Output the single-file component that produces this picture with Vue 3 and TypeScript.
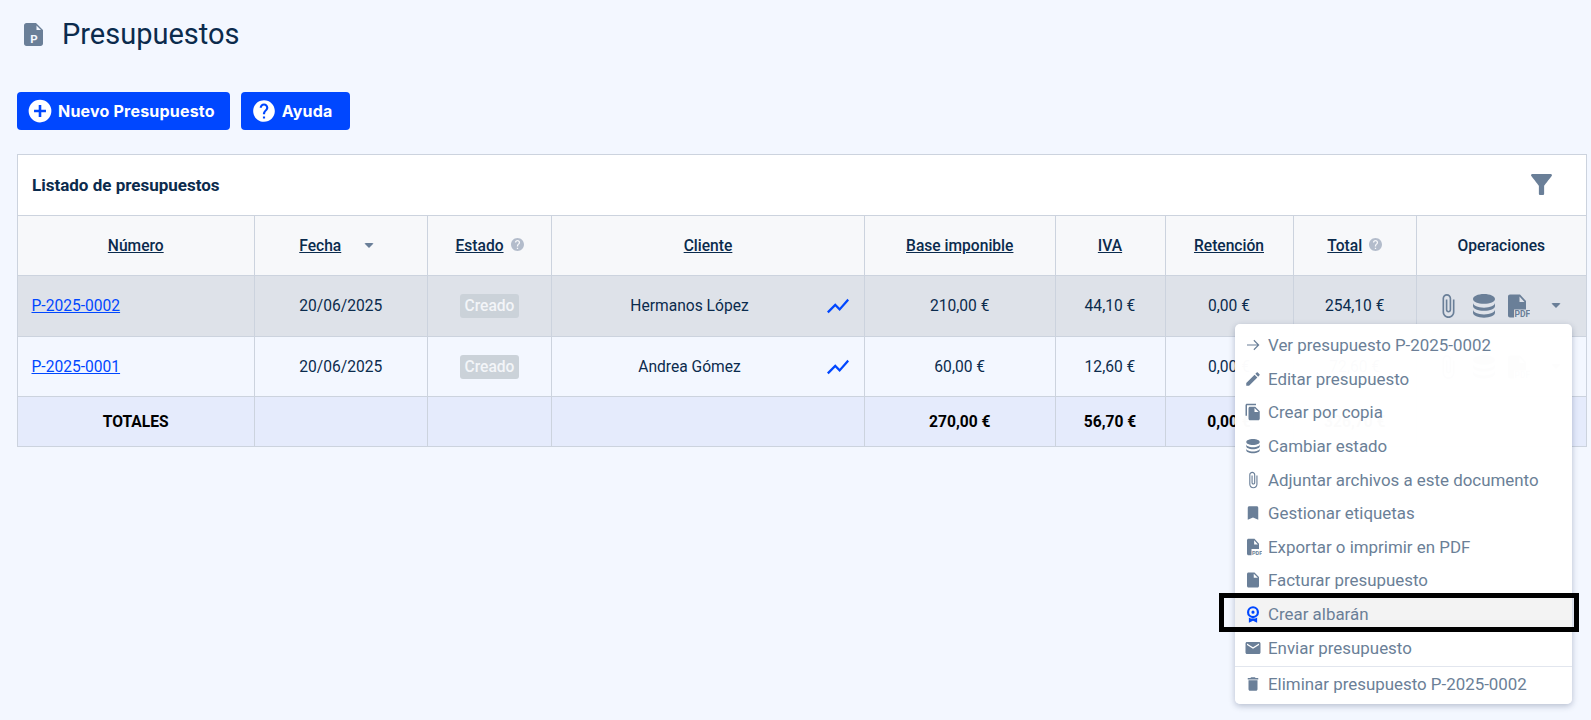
<script setup lang="ts">
interface MenuItem {
  label: string
  d: string
  pdf?: boolean
  active?: boolean
  rule?: boolean
}
interface Row {
  num: string
  client: string
  base: string
  iva: string
  ret: string
  total: string
  cls: string
}

const P = {
  arrow: 'M4 11.2h13.6l-5-5 1.1-1.1 6.9 6.9-6.9 6.9-1.1-1.1 5-5H4z',
  edit: 'M3 17.25V21h3.75L17.81 9.94l-3.75-3.75L3 17.25zM20.71 7.04c.39-.39.39-1.02 0-1.41l-2.34-2.34c-.39-.39-1.02-.39-1.41 0l-1.83 1.83 3.75 3.75 1.83-1.83z',
  copy: 'M16 1H4c-1.1 0-2 .9-2 2v14h2V3h12V1zm-1 4l6 6v10c0 1.1-.9 2-2 2H7.99C6.89 23 6 22.1 6 21l.01-14c0-1.1.89-2 1.99-2h7zm-1 7h5.5L14 6.5V12z',
  db: 'M12 2.500c5 0 9 1.800 9 4s-4 4-9 4-9-1.800-9-4 4-4 9-4zM3 9.600c0 2.200 4 4 9 4s9-1.800 9-4v2.600c0 2.200-4 4-9 4s-9-1.800-9-4zM3 15.200c0 2.200 4 4 9 4s9-1.800 9-4v2.600c0 2.200-4 4-9 4s-9-1.800-9-4z',
  clip: 'M16.5 6v11.5c0 2.21-1.79 4-4 4s-4-1.79-4-4V5c0-1.38 1.12-2.5 2.5-2.5s2.5 1.12 2.5 2.5v10.5c0 .55-.45 1-1 1s-1-.45-1-1V6H10v9.5c0 1.38 1.12 2.5 2.5 2.5s2.5-1.12 2.5-2.5V5c0-2.21-1.79-4-4-4S7 2.79 7 5v12.5c0 3.04 2.46 5.5 5.5 5.5s5.5-2.46 5.5-5.5V6h-1.5z',
  bookmark: 'M17 3H7c-1.1 0-1.99.9-1.99 2L5 21l7-3 7 3V5c0-1.1-.9-2-2-2z',
  pdf: 'M6 1h8l6 6.500V14.500H10V23H6c-1.100 0-2-.9-2-2V3c0-1.100.9-2 2-2zM13.500 3v5.500h5z',
  opPdf: 'M2 0h10l6 6.500V15H6v8H2c-1.100 0-2-.9-2-2V2C0 .9.9 0 2 0zM11.500 2v5.500h5z',
  file: 'M6 2c-1.1 0-1.99.9-1.99 2L4 20c0 1.1.89 2 1.99 2H18c1.1 0 2-.9 2-2V8l-6-6H6zm7 7V3.5L18.5 9H13z',
  ribbon: 'M12 1.500a8 8 0 1 1 0 16 8 8 0 0 1 0-16zM12 4.400a5.100 5.100 0 1 0 0 10.200 5.100 5.100 0 0 0 0-10.200zM12 7.400a2.100 2.100 0 1 1 0 4.200 2.100 2.100 0 0 1 0-4.200zM6.500 16.500c1.500 1 3.400 1.600 5.500 1.600s4-.6 5.500-1.600V23.500L12 21l-5.500 2.500z',
  mail: 'M20 4H4c-1.1 0-1.99.9-1.99 2L2 18c0 1.1.9 2 2 2h16c1.1 0 2-.9 2-2V6c0-1.1-.9-2-2-2zm0 4l-8 5-8-5V6l8 5 8-5v2z',
  trash: 'M6 19c0 1.1.9 2 2 2h8c1.1 0 2-.9 2-2V7H6v12zM19 4h-3.5l-1-1h-5l-1 1H5v2h14V4z',
  filter: 'M4.25 5.61C6.27 8.2 10 13 10 13v6c0 .55.45 1 1 1h2c.55 0 1-.45 1-1v-6s3.720-4.800 5.740-7.390c.51-.66.04-1.610-.79-1.610H5.040c-.83 0-1.300.95-.79 1.610z',
  chart: 'M3.5 18.49l6-6.010 4 4L22 6.920l-1.410-1.410-7.090 7.970-4-4L2 16.990z',
  help: 'M12 2C6.48 2 2 6.48 2 12s4.48 10 10 10 10-4.48 10-10S17.520 2 12 2zm1 17h-2v-2h2v2zm2.070-7.750l-.9.92C13.450 12.900 13 13.500 13 15h-2v-.5c0-1.100.45-2.100 1.170-2.830l1.240-1.260c.37-.36.59-.86.59-1.410 0-1.100-.9-2-2-2s-2 .9-2 2H8c0-2.210 1.790-4 4-4s4 1.790 4 4c0 .88-.36 1.680-.93 2.250z',
  plus: 'M12 1.500a10.500 10.500 0 1 1 0 21 10.500 10.500 0 0 1 0-21zM10.800 6.500v4.300H6.500v2.400h4.300v4.300h2.400v-4.300h4.300v-2.400h-4.300V6.500z',
  doc: 'M2.500 0h9.500L19 7v13.500c0 1.400-1.100 2.500-2.500 2.500h-14C1.100 23 0 21.900 0 20.500v-18C0 1.100 1.100 0 2.500 0zM12.500 2.500V7h4.500z',
}

const menu: MenuItem[] = [
  { label: 'Ver presupuesto P-2025-0002', d: P.arrow },
  { label: 'Editar presupuesto', d: P.edit },
  { label: 'Crear por copia', d: P.copy },
  { label: 'Cambiar estado', d: P.db },
  { label: 'Adjuntar archivos a este documento', d: P.clip },
  { label: 'Gestionar etiquetas', d: P.bookmark },
  { label: 'Exportar o imprimir en PDF', d: P.pdf, pdf: true },
  { label: 'Facturar presupuesto', d: P.file },
  { label: 'Crear albarán', d: P.ribbon, active: true },
  { label: 'Enviar presupuesto', d: P.mail },
  { label: 'Eliminar presupuesto P-2025-0002', d: P.trash, rule: true },
]

const rows: Row[] = [
  { num: 'P-2025-0002', client: 'Hermanos López', base: '210,00 €', iva: '44,10 €', ret: '0,00 €', total: '254,10 €', cls: 'row-a' },
  { num: 'P-2025-0001', client: 'Andrea Gómez', base: '60,00 €', iva: '12,60 €', ret: '0,00 €', total: '72,60 €', cls: 'row-b' },
]
</script>

<template>
  <div class="page">
    <header class="title">
      <svg class="title-icon" viewBox="0 0 19 23">
        <path fill-rule="evenodd" :d="P.doc" />
        <text x="10" y="20" text-anchor="middle" class="doc-letter">P</text>
      </svg>
      <h1>Presupuestos</h1>
    </header>

    <div class="actions">
      <button class="btn" type="button">
        <svg viewBox="0 0 24 24"><path fill-rule="evenodd" :d="P.plus" /></svg>
        Nuevo Presupuesto
      </button>
      <button class="btn" type="button">
        <svg viewBox="0 0 24 24"><path fill-rule="evenodd" :d="P.help" /></svg>
        Ayuda
      </button>
    </div>

    <table class="grid">
      <colgroup>
        <col class="c1" /><col class="c2" /><col class="c3" /><col class="c4" /><col class="c5" />
        <col class="c6" /><col class="c7" /><col class="c8" /><col class="c9" />
      </colgroup>
      <thead>
        <tr class="caption">
          <th colspan="9">
            <div class="caption-inner">
              <span>Listado de presupuestos</span>
              <svg class="filter" viewBox="4 4 16 16"><path :d="P.filter" /></svg>
            </div>
          </th>
        </tr>
        <tr class="heads">
          <th><a>Número</a></th>
          <th>
            <span class="head-fecha"><a>Fecha</a><i class="caret"></i></span>
          </th>
          <th>
            <span class="head-help"><a>Estado</a><svg viewBox="2 2 20 20"><path fill-rule="evenodd" :d="P.help" /></svg></span>
          </th>
          <th><a>Cliente</a></th>
          <th><a>Base imponible</a></th>
          <th><a>IVA</a></th>
          <th><a>Retención</a></th>
          <th>
            <span class="head-help"><a>Total</a><svg viewBox="2 2 20 20"><path fill-rule="evenodd" :d="P.help" /></svg></span>
          </th>
          <th>Operaciones</th>
        </tr>
      </thead>
      <tbody>
        <tr v-for="r in rows" :key="r.num" :class="r.cls">
          <td class="num"><a class="link">{{ r.num }}</a></td>
          <td>20/06/2025</td>
          <td><span class="badge">Creado</span></td>
          <td>
            <div class="client">
              <span class="client-name">{{ r.client }}</span>
              <svg class="chart" viewBox="2 5 20 14"><path :d="P.chart" /></svg>
            </div>
          </td>
          <td>{{ r.base }}</td>
          <td>{{ r.iva }}</td>
          <td>{{ r.ret }}</td>
          <td>{{ r.total }}</td>
          <td>
            <div class="ops">
              <svg class="op-clip" viewBox="6 1 13 22"><path :d="P.clip" /></svg>
              <svg class="op-db" viewBox="3 2.500 18 19.500"><path :d="P.db" /></svg>
              <svg class="op-pdf" viewBox="0 0 22 23">
                <path fill-rule="evenodd" :d="P.opPdf" />
                <text x="6.500" y="22.500" class="pdf-mark">PDF</text>
              </svg>
              <i class="caret"></i>
            </div>
          </td>
        </tr>
      </tbody>
      <tfoot>
        <tr class="totals">
          <td>TOTALES</td>
          <td></td>
          <td></td>
          <td></td>
          <td>270,00 €</td>
          <td>56,70 €</td>
          <td>0,00 €</td>
          <td>326,70 €</td>
          <td></td>
        </tr>
      </tfoot>
    </table>

    <ul class="menu">
      <li
        v-for="m in menu"
        :key="m.label"
        class="item"
        :class="{ active: m.active, rule: m.rule }"
      >
        <svg class="item-icon" viewBox="0 0 24 24">
          <path fill-rule="evenodd" :d="m.d" />
          <text v-if="m.pdf" x="10.500" y="23" class="pdf-mark small">PDF</text>
        </svg>
        <span>{{ m.label }}</span>
      </li>
    </ul>

    <div class="highlight"></div>
  </div>
</template>

<style>
body {
  background: #f3f7ff;
}
</style>

<style scoped>
.page {
  position: relative;
  box-sizing: border-box;
  height: 720px;
  padding: 0 6px 0 17px;
  overflow: hidden;
  font-family: Roboto, "Liberation Sans", sans-serif;
  color: #0b2b4d;
  background: #f3f7ff;
}
.title {
  display: flex;
  align-items: center;
  height: 68px;
  padding-left: 7px;
  gap: 19px;
}
.title-icon {
  width: 19px;
  height: 23px;
  fill: #6a7f98;
}
.doc-letter {
  font: 700 11.500px Roboto, sans-serif;
  fill: #f3f7ff;
}
h1 {
  margin: 0;
  font-size: 29px;
  font-weight: 400;
  color: #0b2b4d;
}
.actions {
  display: flex;
  gap: 11px;
  margin-top: 24px;
}
.btn {
  display: flex;
  align-items: center;
  gap: 6px;
  height: 38px;
  padding: 0 15px 0 11px;
  border: 0;
  border-radius: 4px;
  background: #0047ff;
  color: #fff;
  font-family: Inter, sans-serif;
  font-size: 16px;
  font-weight: 700;
  letter-spacing: 0.2px;
}
.btn + .btn {
  padding-right: 17px;
}
.btn svg {
  width: 26px;
  height: 26px;
  margin: 0 -1px 0 -1px;
  fill: #fff;
}
.grid {
  width: 1569px;
  margin-top: 24px;
  border-collapse: collapse;
  table-layout: fixed;
  font-size: 15.600px;
}
.c1 { width: 236.5px; }
.c2 { width: 173.5px; }
.c3 { width: 124px; }
.c4 { width: 313px; }
.c5 { width: 190.500px; }
.c6 { width: 110px; }
.c7 { width: 128px; }
.c8 { width: 123.500px; }
.c9 { width: 169.500px; }
th,
td {
  padding: 0;
  border: 1px solid #ccd3de;
  text-align: center;
  font-weight: 400;
}
.caption {
  height: 61px;
  background: #fff;
}
.caption th {
  padding-bottom: 1px;
}
.caption-inner {
  display: flex;
  align-items: center;
  justify-content: space-between;
  padding: 0 34px 0 14px;
  font-weight: 700;
  font-size: 17px;
}
.filter {
  width: 21px;
  height: 21px;
  fill: #6a7f98;
}
.heads {
  height: 60px;
  background: #f7f8fa;
}
.heads th {
  font-weight: 500;
}
.heads a {
  text-decoration: underline;
}
.head-fecha {
  display: inline-flex;
  align-items: center;
  gap: 23px;
  margin-right: 8px;
}
.head-help {
  display: inline-flex;
  align-items: center;
  gap: 7px;
}
.head-help svg {
  width: 13px;
  height: 13px;
  margin-top: -3px;
  fill: #b3bccb;
}
.caret {
  display: inline-block;
  border-style: solid;
  border-width: 5.500px 5px 0;
  border-color: #6a7f98 transparent transparent;
  border-radius: 2px;
}
.row-a {
  height: 61px;
  background: #dee2e9;
}
.row-a td {
  padding-bottom: 1px;
}
.row-b {
  height: 60px;
  background: #f3f7ff;
}
td.num {
  padding-left: 13.500px;
  text-align: left;
}
.link {
  color: #0047ff;
  text-decoration: underline;
}
.badge {
  display: inline-block;
  padding: 0 5px;
  height: 24px;
  line-height: 24px;
  border-radius: 3px;
  background: #cbd2d9;
  color: #f3f5f8;
  font-weight: 500;
}
.client {
  display: flex;
  align-items: center;
  padding: 0 15px 0 0;
}
.client-name {
  flex: 1;
}
.chart {
  width: 22px;
  height: 16px;
  fill: #0047ff;
}
.ops {
  display: flex;
  align-items: center;
  padding-left: 24px;
}
.ops svg {
  fill: #6a7f98;
  height: 24px;
}
.op-clip {
  width: 15px;
}
.op-db {
  width: 22px;
  margin-left: 17px;
}
.op-pdf {
  width: 22px;
  margin-left: 13px;
}
.ops .caret {
  margin-left: 21px;
}
.pdf-mark {
  font: 700 8.500px Roboto, sans-serif;
  fill: #6a7f98;
}
.pdf-mark.small {
  font-size: 7.500px;
}
.totals {
  height: 50px;
  background: #e5ebfc;
  color: #000;
}
.totals td {
  font-weight: 700;
}
.menu {
  position: absolute;
  top: 324px;
  left: 1235px;
  width: 337px;
  margin: 0;
  padding: 4.500px 0 0;
  box-sizing: border-box;
  height: 380px;
  list-style: none;
  border-radius: 5px;
  background: rgba(255, 255, 255, 0.985);
  box-shadow: 0 2px 6px rgba(20, 40, 80, 0.28);
  color: #6b7f97;
  font-size: 16.900px;
}
.item {
  display: flex;
  align-items: center;
  gap: 6px;
  height: 33.600px;
  padding-left: 9px;
}
.item.active {
  background: #f3f3f3;
}
.item.active .item-icon {
  fill: #0047ff;
}
.item.rule {
  margin-top: 1.500px;
  padding-top: 0;
  border-top: 1px solid #e2e6ee;
}
.item-icon {
  width: 18px;
  height: 18px;
  fill: #6a7f98;
}
.highlight {
  position: absolute;
  top: 593px;
  left: 1219px;
  width: 360px;
  height: 39px;
  box-sizing: border-box;
  border: 5px solid #000;
}
</style>
